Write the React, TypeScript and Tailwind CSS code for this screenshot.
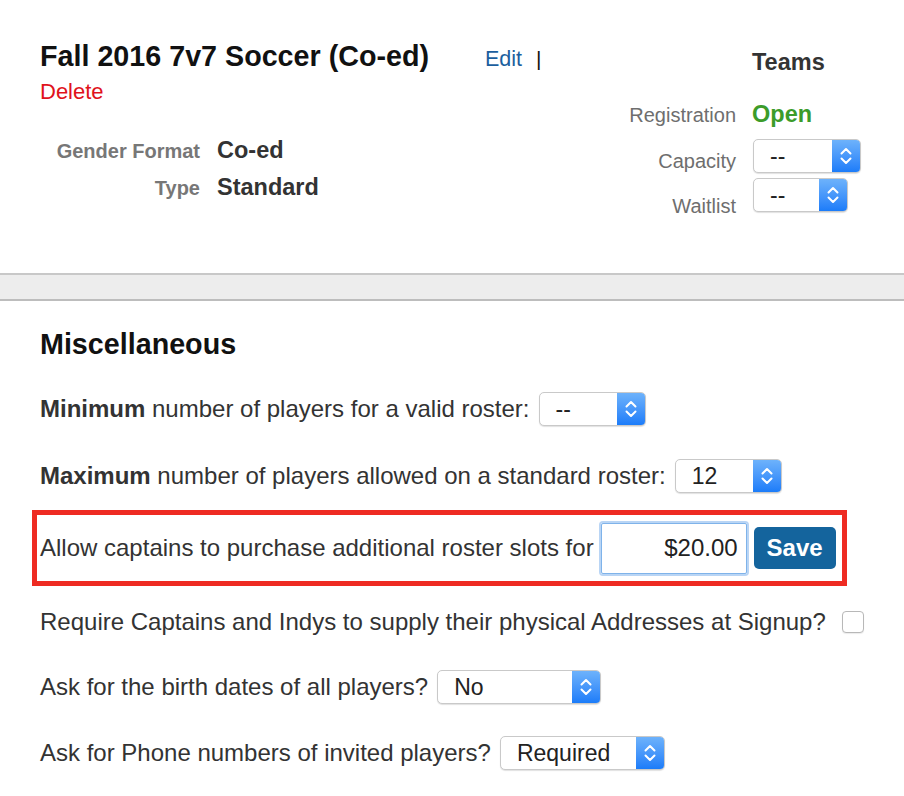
import React from "react";

function Stepper() {
  return (
    <svg width="14" height="22" viewBox="0 0 14 22" fill="none" stroke="white" strokeWidth="2" strokeLinecap="round" strokeLinejoin="round">
      <path d="M2.5 8.5 7 4l4.5 4.5" />
      <path d="M2.5 13.5 7 18l4.5-4.5" />
    </svg>
  );
}

function Select({ value, className }: { value: string; className: string }) {
  return (
    <div
      className={`flex h-[34px] shrink-0 overflow-hidden rounded-[5px] border border-[#c9c9c9] bg-white shadow-[0_1px_1px_rgba(0,0,0,0.12)] ${className}`}
    >
      <span className="flex-1 pl-4 text-[23px] leading-[32px] text-[#222]">{value}</span>
      <span className="flex w-[28px] items-center justify-center bg-gradient-to-b from-[#6db2fb] to-[#1b7cf9]">
        <Stepper />
      </span>
    </div>
  );
}

function DetailRow({ label, value }: { label: string; value: string }) {
  return (
    <div className="flex items-baseline leading-[36px]">
      <span className="w-[160px] text-right text-[20px] font-bold text-[#777]">{label}</span>
      <span className="ml-[17px] text-[23.5px] font-bold text-[#333]">{value}</span>
    </div>
  );
}

export default function App() {
  return (
    <div className="min-h-screen bg-white font-['Liberation_Sans',Arial,sans-serif] text-[#333]">
      {/* header */}
      <section className="flex h-[273px] px-10">
        <div className="w-[560px] pt-[40px]">
          <div className="flex items-baseline">
            <h1 className="w-[445px] text-[28.7px] font-bold leading-[32px] text-[#111]">
              Fall 2016 7v7 Soccer (Co-ed)
            </h1>
            <a className="text-[21.5px] text-[#1c5f9e]">Edit</a>
            <span className="ml-[14px] text-[21px] text-[#111]">|</span>
          </div>
          <a className="mt-[5px] block text-[22px] leading-[24px] text-[#e0121b]">Delete</a>
          <div className="mt-[28px]">
            <DetailRow label="Gender Format" value="Co-ed" />
            <DetailRow label="Type" value="Standard" />
          </div>
        </div>

        <div className="flex-1 pt-[48px]">
          <div className="flex items-baseline leading-[28px]">
            <span className="w-[136px]" />
            <span className="ml-4 text-[23.5px] font-bold text-[#333]">Teams</span>
          </div>
          <div className="mt-[24px] flex items-baseline leading-[28px]">
            <span className="w-[136px] text-right text-[20px] text-[#6e6e6e]">Registration</span>
            <span className="ml-4 text-[23.5px] font-bold text-[#3c9c2a]">Open</span>
          </div>
          <div className="mt-[10px] flex items-end">
            <span className="w-[136px] text-right text-[20px] leading-[24px] text-[#6e6e6e]">Capacity</span>
            <Select value="--" className="ml-[17px] w-[108px]" />
          </div>
          <div className="mt-[5px] flex items-end">
            <span className="mb-[-6px] w-[136px] text-right text-[20px] leading-[24px] text-[#6e6e6e]">Waitlist</span>
            <Select value="--" className="ml-[17px] w-[95px]" />
          </div>
        </div>
      </section>

      <div className="h-[28px] border-y-2 border-t-[#c8c8c8] border-b-[#bdbdbd] bg-[#ededed]" />

      {/* misc */}
      <section className="px-10 pt-[27px] text-[24px]">
        <h2 className="text-[28.7px] font-bold leading-[32px] text-[#111]">Miscellaneous</h2>

        <div className="mt-[32px] flex h-[34px] items-center gap-[9px]">
          <span>
            <b>Minimum</b> number of players for a valid roster:
          </span>
          <Select value="--" className="w-[107px]" />
        </div>

        <div className="mt-[33px] flex h-[34px] items-center gap-[9px]">
          <span>
            <b>Maximum</b> number of players allowed on a standard roster:
          </span>
          <Select value="12" className="w-[107px]" />
        </div>

        <div className="ml-[-8px] mt-[17px] flex h-[76px] w-[815px] items-center border-[5px] border-[#ee2b22] pl-[3px]">
          <span>Allow captains to purchase additional roster slots for</span>
          <input
            readOnly
            value="$20.00"
            className="ml-[7px] h-[51px] w-[146px] rounded-[2px] border border-[#7fb3ea] pr-2 text-right text-[24px] text-[#222] shadow-[0_0_0_2px_#b9d5f5] outline-none"
          />
          <button className="ml-[7px] h-[42px] w-[82px] rounded-[5px] bg-[#14649d] text-[24px] font-bold text-white">
            Save
          </button>
        </div>

        <div className="mt-[19px] flex h-[34px] items-center gap-4">
          <span>Require Captains and Indys to supply their physical Addresses at Signup?</span>
          <span className="h-[22px] w-[22px] rounded-[4px] border border-[#b8b8b8] bg-white shadow-[0_1px_1px_rgba(0,0,0,0.08)]" />
        </div>

        <div className="mt-[31px] flex h-[34px] items-center gap-[9px]">
          <span>Ask for the birth dates of all players?</span>
          <Select value="No" className="w-[164px]" />
        </div>

        <div className="mt-[32px] flex h-[34px] items-center gap-[9px]">
          <span>Ask for Phone numbers of invited players?</span>
          <Select value="Required" className="w-[165px]" />
        </div>
      </section>
    </div>
  );
}
